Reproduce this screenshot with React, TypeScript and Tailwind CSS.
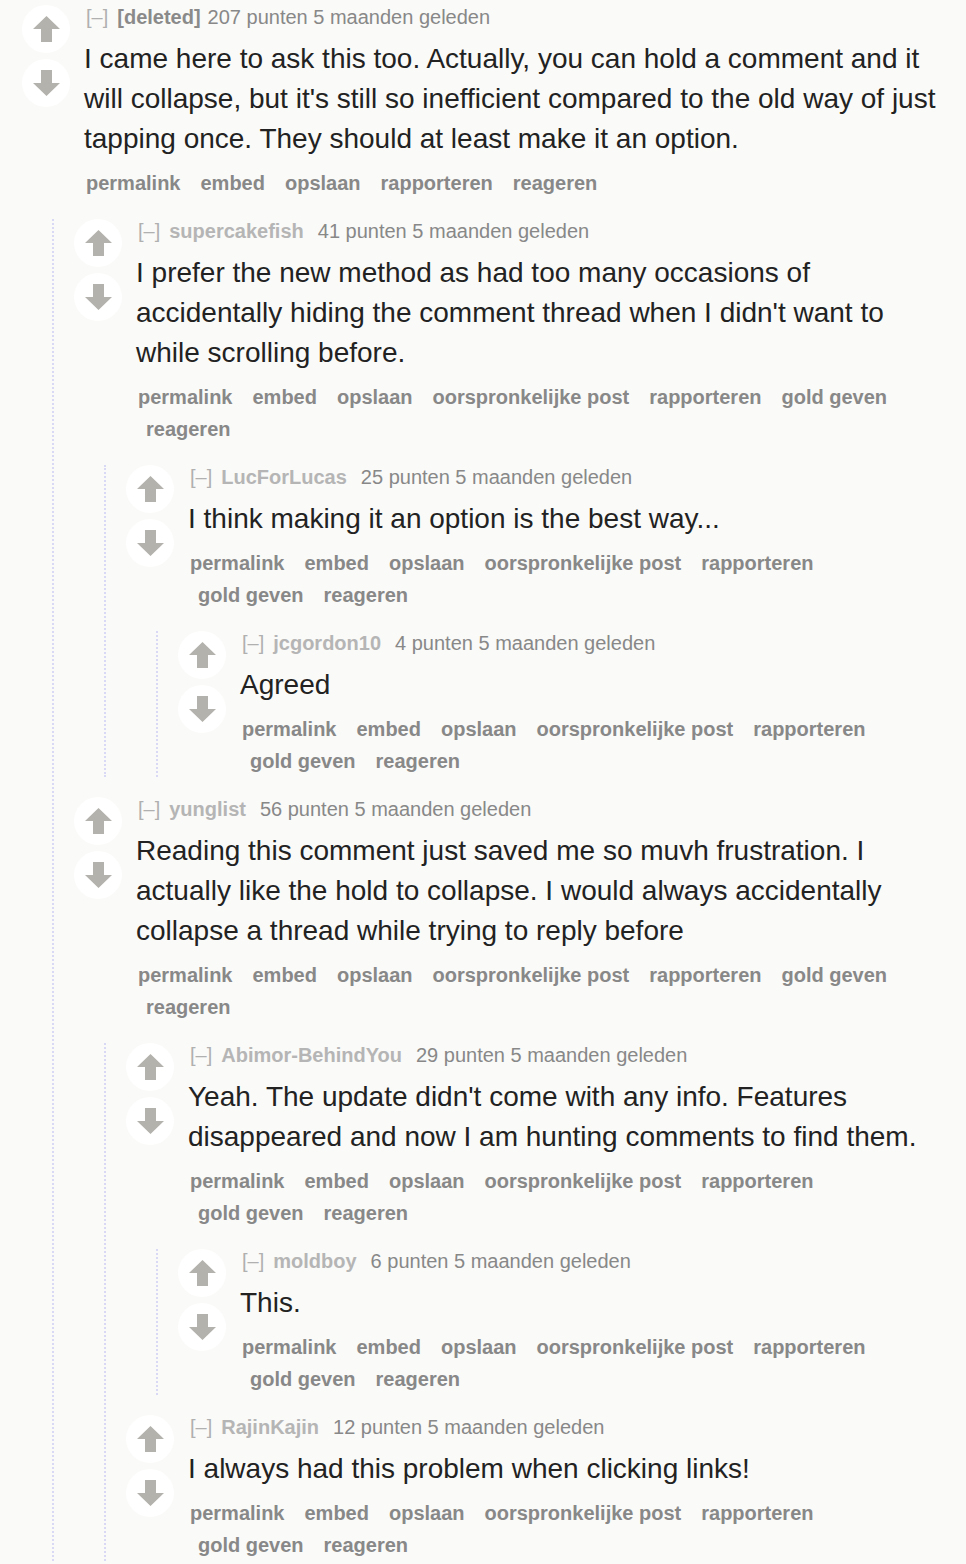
import React from "react";

type C = {
  user: string;
  deleted?: boolean;
  points: string;
  body: string;
  links: string[];
  children?: C[];
};

const full = ["permalink", "embed", "opslaan", "oorspronkelijke post", "rapporteren", "gold geven", "reageren"];

const data: C = {
  user: "[deleted]",
  deleted: true,
  points: "207 punten",
  body: "I came here to ask this too. Actually, you can hold a comment and it will collapse, but it's still so inefficient compared to the old way of just tapping once. They should at least make it an option.",
  links: ["permalink", "embed", "opslaan", "rapporteren", "reageren"],
  children: [
    {
      user: "supercakefish",
      points: "41 punten",
      body: "I prefer the new method as had too many occasions of accidentally hiding the comment thread when I didn't want to while scrolling before.",
      links: full,
      children: [
        {
          user: "LucForLucas",
          points: "25 punten",
          body: "I think making it an option is the best way...",
          links: full,
          children: [
            { user: "jcgordon10", points: "4 punten", body: "Agreed", links: full },
          ],
        },
      ],
    },
    {
      user: "yunglist",
      points: "56 punten",
      body: "Reading this comment just saved me so muvh frustration. I actually like the hold to collapse. I would always accidentally collapse a thread while trying to reply before",
      links: full,
      children: [
        {
          user: "Abimor-BehindYou",
          points: "29 punten",
          body: "Yeah. The update didn't come with any info. Features disappeared and now I am hunting comments to find them.",
          links: full,
          children: [
            { user: "moldboy", points: "6 punten", body: "This.", links: full },
          ],
        },
        {
          user: "RajinKajin",
          points: "12 punten",
          body: "I always had this problem when clicking links!",
          links: full,
        },
      ],
    },
  ],
};

function Arrow({ down }: { down?: boolean }) {
  return (
    <svg width="27" height="26" viewBox="0 0 27 26" className={down ? "rotate-180" : ""}>
      <polygon points="13.5,0 27,13 19,13 19,26 8,26 8,13 0,13" fill="#b4b2ac" />
    </svg>
  );
}

function Comment({ c }: { c: C }) {
  return (
    <div className="flex flex-col">
      <div className="flex">
        <div className="flex w-[48px] shrink-0 flex-col gap-[6px]">
          <div className="flex h-[48px] w-[48px] items-center justify-center rounded-full bg-white">
            <Arrow />
          </div>
          <div className="flex h-[48px] w-[48px] items-center justify-center rounded-full bg-white">
            <Arrow down />
          </div>
        </div>
        <div className="ml-[14px] min-w-0 flex-1">
          <div className="flex h-[24px] items-center pl-[2px] text-[20px] leading-[24px]">
            <span className="mr-[9px] text-[#b0b0b0]">[–]</span>
            {c.deleted ? (
              <span className="mr-[7px] font-bold text-[#8a8a8a]">{c.user}</span>
            ) : (
              <span className="mr-[14px] font-bold text-[#b5b5b5]">{c.user}</span>
            )}
            <span className="text-[#888888]">{c.points} 5 maanden geleden</span>
          </div>
          <div className="mt-[10px] text-[28px] leading-[40px] text-[#222222]">{c.body}</div>
          <div className="mt-[8px] flex flex-wrap pl-[2px] text-[20px] font-bold leading-[32px] text-[#888888]">
            {c.links.map((l, i) => (
              <span key={l} className={i === 0 ? "pl-0 pr-[12px] whitespace-nowrap" : "pl-[8px] pr-[12px] whitespace-nowrap"}>
                {l}
              </span>
            ))}
          </div>
        </div>
      </div>
      {c.children && c.children.length > 0 && (
        <div className="ml-[30px] mt-5 flex flex-col gap-5 border-l-2 border-dotted border-[#d9d9f6] pl-[20px]">
          {c.children.map((ch) => (
            <Comment key={ch.user} c={ch} />
          ))}
        </div>
      )}
    </div>
  );
}

export default function App() {
  return (
    <div
      className="h-[1564px] w-[966px] overflow-hidden bg-[#fafaf8] pl-[22px] pr-[22px] pt-[5px]"
      style={{ fontFamily: '"Liberation Sans", Arial, Helvetica, sans-serif' }}
    >
      <Comment c={data} />
    </div>
  );
}
